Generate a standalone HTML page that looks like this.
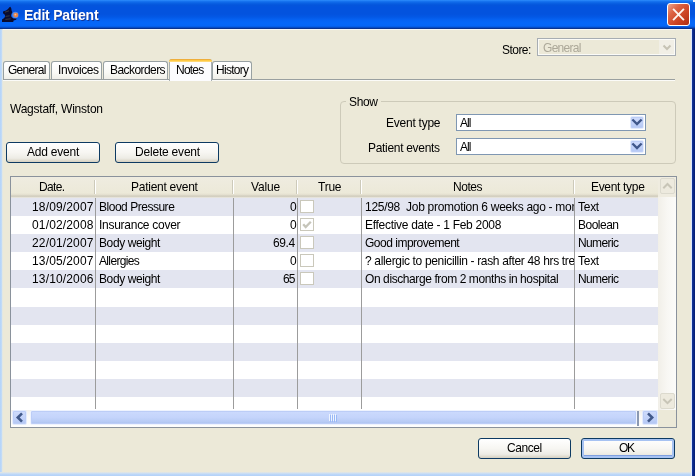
<!DOCTYPE html>
<html>
<head>
<meta charset="utf-8">
<title>Edit Patient</title>
<style>
*{box-sizing:border-box;margin:0;padding:0}
html,body{width:695px;height:476px;overflow:hidden;background:#ece9d8}
body{font-family:"Liberation Sans",sans-serif;font-size:12px;color:#000;position:relative}
.a{position:absolute}
.t{position:absolute;white-space:pre;font-size:12px;line-height:14px;z-index:5;transform-origin:0 6px;transform:scaleY(1.1);will-change:transform}
#tb{left:0;top:0;width:695px;height:29px;background:linear-gradient(to bottom,#2d8dfc 0px,#1672ee 1.5px,#0a62e4 3px,#0455dc 5px,#0353de 8px,#0353de 14px,#0358e6 17px,#0563f3 20px,#0567f8 23px,#0566f6 26px,#0552d2 27.3px,#0a3898 28.2px,#062c80 29px)}
#title{left:24.3px;top:7px;font-size:14px;line-height:16px;font-weight:bold;color:#fff;text-shadow:1px 1px 0 #123596;white-space:nowrap;letter-spacing:-0.22px;will-change:transform}
#close{left:667px;top:3px;width:23px;height:23px;border:1px solid #fff;border-radius:3px;background:linear-gradient(135deg,#eba58f 0%,#dc6444 30%,#cb4322 65%,#ad2e13 100%)}
.tab{border:1px solid #98a1a2;border-bottom:none;border-radius:3px 3px 0 0;background:linear-gradient(to bottom,#ffffff,#fafaf6 60%,#f0efe8)}
.btn{border:1px solid #0d3a62;border-radius:3px;background:linear-gradient(to bottom,#ffffff 0%,#f7f6f2 50%,#edece5 80%,#d6d0c0 100%)}
.ddb,.sbb{border:1px solid #e4ecfd;border-radius:2px;background:linear-gradient(to bottom,#d0dcfb,#c2d2f9 55%,#b2c6f3);box-shadow:inset 0 0 0 1px #bccdf6}
.sbt{border:1px solid #eef3fe;border-radius:2px;background:linear-gradient(to bottom,#ccdafd,#c4d4fb 50%,#b6caf4 85%,#a6beee);box-shadow:inset 0 0 0 1px #bccdf7}
</style>
</head>
<body>
<div class="a" id="tb"></div>
<svg class="a" style="left:0;top:0" width="22" height="29" viewBox="0 0 22 29"><path d="M10.4 6.8 L11.3 8.6 L11.6 10.6 L12.3 12.2 L11.2 14.4 L10.9 16 L12 17.6 L13.4 18.4 L16.4 18.6 L16.2 19.8 L13.6 20.6 L13.2 21.9 L2 21.9 L2 19.6 L4.2 18 L5.2 16.2 L4.8 14.8 L3 13.2 L3 11.4 L6 10.4 L8 9 L9.4 7.2 Z" fill="#0a0c30"/><path d="M5 12.2 L9 10.8 M5.6 16.4 L9.6 15.8 M5.4 19.4 L10.6 18.8" stroke="#6a6a4a" stroke-width="0.7" opacity="0.7" fill="none"/><circle cx="15.3" cy="15" r="3.2" fill="#9db4e8" opacity="0.55"/><circle cx="15.8" cy="15.1" r="2.4" fill="#ea8548"/><circle cx="15.4" cy="14.6" r="0.9" fill="#f7bd96"/></svg>
<div class="a" id="title">Edit Patient</div>
<div class="a" id="close"><svg class="a" style="left:0;top:0" width="21" height="21" viewBox="0 0 21 21"><path d="M5.1 4.9 L15.9 16.1 M15.9 4.9 L5.1 16.1" stroke="#fdf4ee" stroke-width="1.9"/></svg></div>
<div class="a" style="left:2px;top:29px;width:690px;height:1px;background:#f7f8f6"></div>
<div class="a" style="left:0;top:29px;width:3px;height:447px;background:linear-gradient(to right,#b4d4fa 0,#bcd8f9 45%,#dfe7e6 80%,#ece9d8 100%)"></div>
<div class="a" style="left:691px;top:30px;width:1px;height:446px;background:#dbe7fb"></div>
<div class="a" style="left:692px;top:29px;width:3px;height:447px;background:linear-gradient(to right,#16399c,#0a2a88 45%,#051c72)"></div>
<div class="a" style="left:693px;top:0;width:2px;height:2px;background:#e8eefc"></div>
<div class="a" style="left:0;top:472px;width:691px;height:4px;background:linear-gradient(to bottom,#e8e8de,#cfe0f2 30%,#bcd7f8 60%,#b2d1f8)"></div>
<div class="a" style="left:537px;top:38px;width:139px;height:18px;border:1px solid #a7adb3;background:#ece9d8;box-shadow:inset 0 0 0 1px #fbfbf8"></div><div class="a" style="left:659px;top:40px;width:15px;height:14px;background:#f1efe6"></div><svg class="a" style="left:661px;top:42px" width="12" height="10" viewBox="0 0 12 10"><path d="M2.5 3.5 L6 7 L9.5 3.5" stroke="#c6c3b4" stroke-width="2" fill="none"/></svg>
<div class="a" style="left:3px;top:79px;width:672px;height:1px;background:#9aa0a0"></div>
<div class="a" style="left:3px;top:80px;width:672px;height:1px;background:#fbfbf8"></div>
<div class="a tab" style="left:3px;top:61px;width:47px;height:18px"></div>
<div class="a tab" style="left:51px;top:61px;width:51px;height:18px"></div>
<div class="a tab" style="left:103px;top:61px;width:65px;height:18px"></div>
<div class="a tab" style="left:212px;top:61px;width:40px;height:18px"></div>
<div class="a" style="left:169px;top:59px;width:43px;height:22px;border:1px solid #a9b0b2;border-bottom:none;border-radius:3px 3px 0 0;background:#fcfcfe;z-index:2"></div><div class="a" style="left:169px;top:59px;width:43px;height:3px;border-radius:3px 3px 0 0;background:linear-gradient(to bottom,#e5a03a,#ffc73c 45%,#ffe08e);z-index:3"></div>
<div class="a" style="left:340px;top:101px;width:336px;height:63px;border:1px solid #cdcab9;border-radius:4px"></div>
<div class="a" style="left:346px;top:96px;width:35px;height:12px;background:#ece9d8"></div>
<div class="a" style="left:456px;top:114px;width:190px;height:17px;border:1px solid #7f97b2;background:#fff"></div><div class="a ddb" style="left:629.5px;top:116px;width:14.5px;height:13px"></div><svg class="a" style="left:631px;top:118px" width="12" height="9" viewBox="0 0 12 9"><path d="M1.4 1.5 L6 6 L10.6 1.5" stroke="#3f578a" stroke-width="2.4" fill="none"/></svg>
<div class="a" style="left:456px;top:138px;width:190px;height:17px;border:1px solid #7f97b2;background:#fff"></div><div class="a ddb" style="left:629.5px;top:140px;width:14.5px;height:13px"></div><svg class="a" style="left:631px;top:142px" width="12" height="9" viewBox="0 0 12 9"><path d="M1.4 1.5 L6 6 L10.6 1.5" stroke="#3f578a" stroke-width="2.4" fill="none"/></svg>
<div class="a btn" style="left:6px;top:142px;width:94px;height:21px"></div>
<div class="a btn" style="left:115px;top:142px;width:104px;height:21px"></div>
<div class="a" style="left:10px;top:176px;width:667px;height:252px;border:1px solid #8a929c;background:#fff"></div>
<div class="a" style="left:11px;top:177px;width:647px;height:21px;background:linear-gradient(to bottom,#efece0 0,#ece9d8 16px,#e2dece 18px,#cfcbbb 19px,#d8d4c6 20px,#f3f2ee 21px)"></div>
<div class="a" style="left:94px;top:180px;width:1px;height:14px;background:#cdcaba"></div><div class="a" style="left:95px;top:180px;width:1px;height:14px;background:#fff"></div>
<div class="a" style="left:232px;top:180px;width:1px;height:14px;background:#cdcaba"></div><div class="a" style="left:233px;top:180px;width:1px;height:14px;background:#fff"></div>
<div class="a" style="left:296px;top:180px;width:1px;height:14px;background:#cdcaba"></div><div class="a" style="left:297px;top:180px;width:1px;height:14px;background:#fff"></div>
<div class="a" style="left:360px;top:180px;width:1px;height:14px;background:#cdcaba"></div><div class="a" style="left:361px;top:180px;width:1px;height:14px;background:#fff"></div>
<div class="a" style="left:573px;top:180px;width:1px;height:14px;background:#cdcaba"></div><div class="a" style="left:574px;top:180px;width:1px;height:14px;background:#fff"></div>
<div class="a" style="left:11px;top:198.0px;width:647px;height:18.1px;background:#e3e5f0"></div>
<div class="a" style="left:11px;top:234.2px;width:647px;height:18.1px;background:#e3e5f0"></div>
<div class="a" style="left:11px;top:270.4px;width:647px;height:18.1px;background:#e3e5f0"></div>
<div class="a" style="left:11px;top:306.6px;width:647px;height:18.1px;background:#e3e5f0"></div>
<div class="a" style="left:11px;top:342.8px;width:647px;height:18.1px;background:#e3e5f0"></div>
<div class="a" style="left:11px;top:379.0px;width:647px;height:18.1px;background:#e3e5f0"></div>
<div class="a" style="left:95px;top:198px;width:1px;height:211px;background:#9c9c9c"></div>
<div class="a" style="left:233px;top:198px;width:1px;height:211px;background:#9c9c9c"></div>
<div class="a" style="left:297px;top:198px;width:1px;height:211px;background:#9c9c9c"></div>
<div class="a" style="left:361px;top:198px;width:1px;height:211px;background:#9c9c9c"></div>
<div class="a" style="left:574px;top:198px;width:1px;height:211px;background:#9c9c9c"></div>
<div class="a" style="left:300.4px;top:200px;width:13.2px;height:13.2px;border:1px solid #cac8bb;background:#fff"></div>
<div class="a" style="left:300.4px;top:218px;width:13.2px;height:13.2px;border:1px solid #cac8bb;background:#fff"></div>
<svg class="a" style="left:302px;top:220px" width="10" height="10" viewBox="0 0 10 10"><path d="M1.2 4.2 L3.7 7.0 L8.8 1.8" stroke="#c6c5ba" stroke-width="2.3" fill="none"/></svg>
<div class="a" style="left:300.4px;top:236px;width:13.2px;height:13.2px;border:1px solid #cac8bb;background:#fff"></div>
<div class="a" style="left:300.4px;top:254px;width:13.2px;height:13.2px;border:1px solid #cac8bb;background:#fff"></div>
<div class="a" style="left:300.4px;top:272px;width:13.2px;height:13.2px;border:1px solid #cac8bb;background:#fff"></div>
<div class="a" style="left:658px;top:177px;width:18px;height:233px;background:linear-gradient(to right,#f1efe8,#f8f7f3 50%,#fcfcfa)"></div>
<div class="a" style="left:658px;top:177px;width:18px;height:20px;background:#efece0"></div>
<div class="a" style="left:660px;top:178px;width:15px;height:16px;border:1px solid #dcdace;border-radius:2px;background:#edeade"></div>
<svg class="a" style="left:661px;top:179px" width="13" height="14" viewBox="0 0 13 14"><path d="M2.3 9.2 L6.5 5 L10.7 9.2" stroke="#c8c5b7" stroke-width="2" fill="none"/></svg>
<div class="a" style="left:660px;top:393px;width:15px;height:16px;border:1px solid #dcdace;border-radius:2px;background:#edeade"></div>
<svg class="a" style="left:661px;top:394px" width="13" height="14" viewBox="0 0 13 14"><path d="M2.3 5 L6.5 9.2 L10.7 5" stroke="#c8c5b7" stroke-width="2" fill="none"/></svg>
<div class="a" style="left:11px;top:410px;width:647px;height:17px;background:linear-gradient(to bottom,#f3f1ec,#fbfaf8 40%,#fefefd)"></div>
<div class="a" style="left:658px;top:410px;width:18px;height:17px;background:#ece9d8"></div>
<div class="a sbb" style="left:12px;top:410px;width:15.4px;height:15px"></div>
<svg class="a" style="left:14px;top:411.4px" width="12" height="13" viewBox="0 0 12 13"><path d="M8 2.3 L3.8 6.5 L8 10.7" stroke="#41598a" stroke-width="2.6" fill="none"/></svg>
<div class="a sbb" style="left:642px;top:410px;width:16px;height:15px"></div>
<svg class="a" style="left:644px;top:411.4px" width="12" height="13" viewBox="0 0 12 13"><path d="M4 2.3 L8.2 6.5 L4 10.7" stroke="#41598a" stroke-width="2.6" fill="none"/></svg>
<div class="a sbt" style="left:30px;top:410px;width:606.5px;height:15px"></div>
<div class="a" style="left:637.2px;top:410.5px;width:1.6px;height:15px;background:#8b99b2"></div>
<div class="a" style="left:329px;top:414px;width:1px;height:7px;background:#eef4fe"></div><div class="a" style="left:330px;top:415px;width:1px;height:7px;background:#9ab8f6"></div>
<div class="a" style="left:331px;top:414px;width:1px;height:7px;background:#eef4fe"></div><div class="a" style="left:332px;top:415px;width:1px;height:7px;background:#9ab8f6"></div>
<div class="a" style="left:333px;top:414px;width:1px;height:7px;background:#eef4fe"></div><div class="a" style="left:334px;top:415px;width:1px;height:7px;background:#9ab8f6"></div>
<div class="a" style="left:335px;top:414px;width:1px;height:7px;background:#eef4fe"></div><div class="a" style="left:336px;top:415px;width:1px;height:7px;background:#9ab8f6"></div>
<div class="a btn" style="left:478px;top:438px;width:93px;height:21px"></div>
<div class="a btn" style="left:581px;top:438px;width:94px;height:21px;box-shadow:inset 0 0 0 2px #a6c2f2, inset 0 -3px 0 0 #7e9fe0"></div>
<span class="t" style="left:501.5px;top:41.84px;letter-spacing:-0.54px">Store:</span>
<span class="t" style="left:542.5px;top:39.84px;letter-spacing:-0.70px;color:#aca899">General</span>
<span class="t" style="left:8.4px;top:62.44px;letter-spacing:-0.73px">General</span>
<span class="t" style="left:57.6px;top:62.44px;letter-spacing:-0.42px">Invoices</span>
<span class="t" style="left:110.1px;top:62.44px;letter-spacing:-0.57px">Backorders</span>
<span class="t" style="left:175.9px;top:62.44px;letter-spacing:-0.79px">Notes</span>
<span class="t" style="left:215.6px;top:62.44px;letter-spacing:-0.71px">History</span>
<span class="t" style="left:10.1px;top:100.84px;letter-spacing:-0.23px">Wagstaff, Winston</span>
<span class="t" style="left:27.2px;top:144.84px;letter-spacing:-0.21px">Add event</span>
<span class="t" style="left:134.6px;top:144.84px;letter-spacing:-0.20px">Delete event</span>
<span class="t" style="left:348.5px;top:94.24px;letter-spacing:-0.34px">Show</span>
<span class="t" style="left:385.5px;top:115.24px;letter-spacing:-0.24px">Event type</span>
<span class="t" style="left:368.0px;top:140.84px;letter-spacing:-0.31px">Patient events</span>
<span class="t" style="left:460.0px;top:115.04px;letter-spacing:-1.02px">All</span>
<span class="t" style="left:460.0px;top:139.84px;letter-spacing:-1.02px">All</span>
<span class="t" style="left:39.0px;top:179.84px;letter-spacing:-0.67px">Date.</span>
<span class="t" style="left:131.4px;top:179.84px;letter-spacing:-0.26px">Patient event</span>
<span class="t" style="left:251.1px;top:179.84px;letter-spacing:-0.15px">Value</span>
<span class="t" style="left:317.8px;top:179.84px;letter-spacing:-0.24px">True</span>
<span class="t" style="left:452.8px;top:179.84px;letter-spacing:-0.46px">Notes</span>
<span class="t" style="left:590.7px;top:179.84px;letter-spacing:-0.32px">Event type</span>
<span class="t" style="left:31.5px;top:199.84px;letter-spacing:0.15px">18/09/2007</span>
<span class="t" style="left:98.7px;top:199.84px;letter-spacing:-0.48px">Blood Pressure</span>
<span class="t" style="left:289.5px;top:199.84px;letter-spacing:-0.69px">0</span>
<span class="t" style="left:364.6px;top:199.84px;letter-spacing:-0.29px;width:209.1px;overflow:hidden">125/98  Job promotion 6 weeks ago - mor</span>
<span class="t" style="left:577.8px;top:199.84px;letter-spacing:-0.27px">Text</span>
<span class="t" style="left:31.5px;top:217.84px;letter-spacing:0.15px">01/02/2008</span>
<span class="t" style="left:98.7px;top:217.84px;letter-spacing:-0.27px">Insurance cover</span>
<span class="t" style="left:289.5px;top:217.84px;letter-spacing:-0.69px">0</span>
<span class="t" style="left:364.6px;top:217.84px;letter-spacing:-0.29px;width:209.1px;overflow:hidden">Effective date - 1 Feb 2008</span>
<span class="t" style="left:577.8px;top:217.84px;letter-spacing:-0.51px">Boolean</span>
<span class="t" style="left:31.5px;top:235.84px;letter-spacing:0.15px">22/01/2007</span>
<span class="t" style="left:98.7px;top:235.84px;letter-spacing:-0.40px">Body weight</span>
<span class="t" style="left:273.4px;top:235.84px;letter-spacing:-0.42px">69.4</span>
<span class="t" style="left:364.6px;top:235.84px;letter-spacing:-0.49px;width:209.1px;overflow:hidden">Good improvement</span>
<span class="t" style="left:577.8px;top:235.84px;letter-spacing:-0.61px">Numeric</span>
<span class="t" style="left:31.5px;top:253.84px;letter-spacing:0.15px">13/05/2007</span>
<span class="t" style="left:98.7px;top:253.84px;letter-spacing:-0.65px">Allergies</span>
<span class="t" style="left:289.5px;top:253.84px;letter-spacing:-0.69px">0</span>
<span class="t" style="left:364.6px;top:253.84px;letter-spacing:-0.34px;width:209.1px;overflow:hidden">? allergic to penicillin - rash after 48 hrs tre</span>
<span class="t" style="left:577.8px;top:253.84px;letter-spacing:-0.27px">Text</span>
<span class="t" style="left:31.5px;top:271.84px;letter-spacing:0.15px">13/10/2006</span>
<span class="t" style="left:98.7px;top:271.84px;letter-spacing:-0.40px">Body weight</span>
<span class="t" style="left:283.0px;top:271.84px;letter-spacing:-0.86px">65</span>
<span class="t" style="left:364.6px;top:271.84px;letter-spacing:-0.41px;width:209.1px;overflow:hidden">On discharge from 2 months in hospital</span>
<span class="t" style="left:577.8px;top:271.84px;letter-spacing:-0.61px">Numeric</span>
<span class="t" style="left:507.4px;top:440.84px;letter-spacing:-0.43px">Cancel</span>
<span class="t" style="left:619.4px;top:440.84px;letter-spacing:-1.44px">OK</span>
</body>
</html>
